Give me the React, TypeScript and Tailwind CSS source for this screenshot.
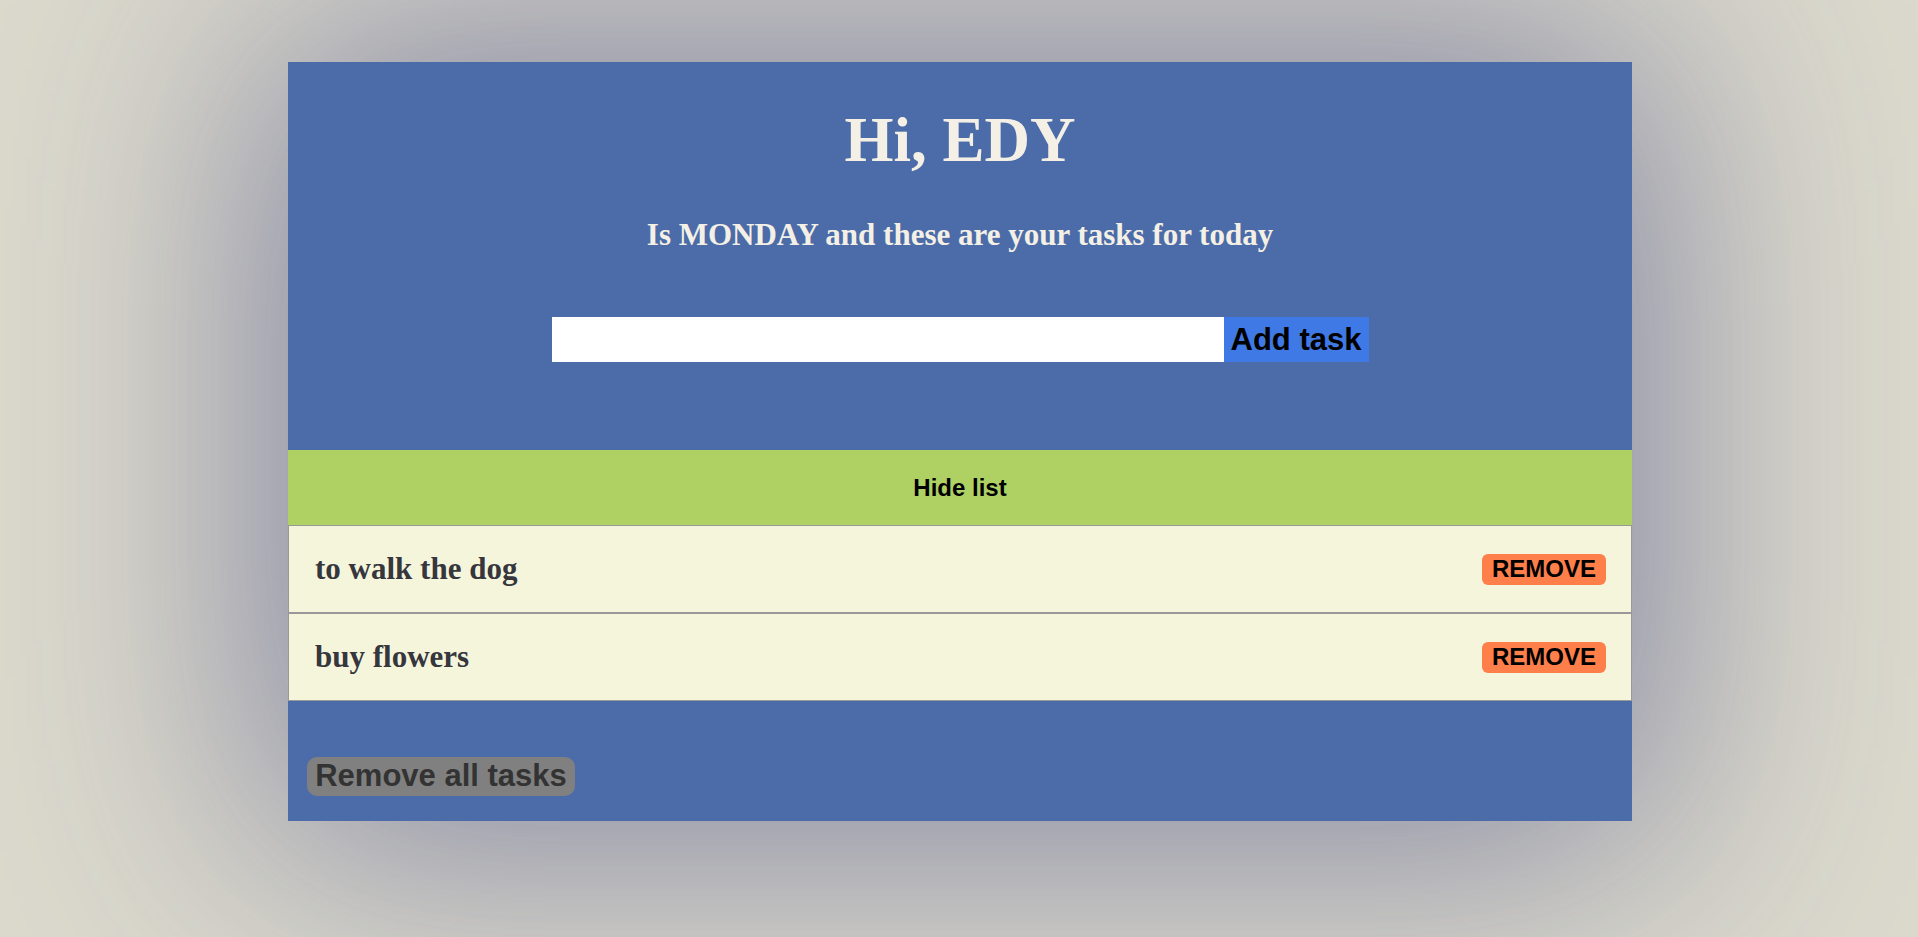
import { useState } from "react"

const serif = "font-['Liberation_Serif','Times_New_Roman',serif]"
const sans = "font-['Liberation_Sans',Arial,sans-serif]"

export default function App() {
  const [tasks, setTasks] = useState(["to walk the dog", "buy flowers"])
  const [text, setText] = useState("")
  const [show, setShow] = useState(true)

  const addTask = () => {
    if (!text.trim()) return
    setTasks([...tasks, text.trim()])
    setText("")
  }

  return (
    <div className="min-h-screen bg-[#dcdacd] pt-[62px] pb-[115px]">
      <div className="ml-[288px] w-[1344px] bg-[#4b6ca8] shadow-[0_0_250px_30px_rgba(70,75,130,0.6)]">
        {/* header */}
        <div className="h-[388px] pt-[43px] text-center">
          <h1 className={`${serif} text-[63px] leading-[70px] font-bold text-[#f5f0e6]`}>Hi, EDY</h1>
          <h2 className={`${serif} mt-[42px] text-[31px] leading-[36px] font-bold text-[#f5f0e6]`}>
            Is MONDAY and these are your tasks for today
          </h2>
          <div className="mt-[64px] flex justify-center">
            <input
              type="text"
              value={text}
              onChange={(e) => setText(e.target.value)}
              className={`${sans} h-[45px] w-[672px] bg-white px-2 text-[24px] text-black outline-none`}
            />
            <button
              onClick={addTask}
              className={`${sans} h-[45px] w-[145px] bg-[#3f79e6] text-[31px] font-bold text-black`}
            >
              Add task
            </button>
          </div>
        </div>

        {/* toggle */}
        <button
          onClick={() => setShow(!show)}
          className={`${sans} flex h-[75px] w-full items-center justify-center bg-[#afd163] text-[24px] font-bold text-black`}
        >
          {show ? "Hide list" : "Show list"}
        </button>

        {/* list */}
        {show && (
          <ul>
            {tasks.map((t, i) => (
              <li
                key={i}
                className="flex h-[88px] items-center justify-between border border-[#999] bg-[#f5f5dc] pl-[26px] pr-[25px]"
              >
                <span className={`${serif} text-[31px] font-bold text-[#36363d]`}>{t}</span>
                <button
                  onClick={() => setTasks(tasks.filter((_, j) => j !== i))}
                  className={`${sans} flex h-[31px] w-[124px] items-center justify-center rounded-[6px] bg-[#ff7f4a] text-[24px] font-bold text-black`}
                >
                  REMOVE
                </button>
              </li>
            ))}
          </ul>
        )}

        {/* footer */}
        <div className="h-[120px] pl-[19px] pt-[56px]">
          <button
            onClick={() => setTasks([])}
            className={`${sans} flex h-[39px] w-[268px] items-center justify-center rounded-[10px] bg-[#808080] text-[31px] font-bold text-[#333]`}
          >
            Remove all tasks
          </button>
        </div>
      </div>
    </div>
  )
}
